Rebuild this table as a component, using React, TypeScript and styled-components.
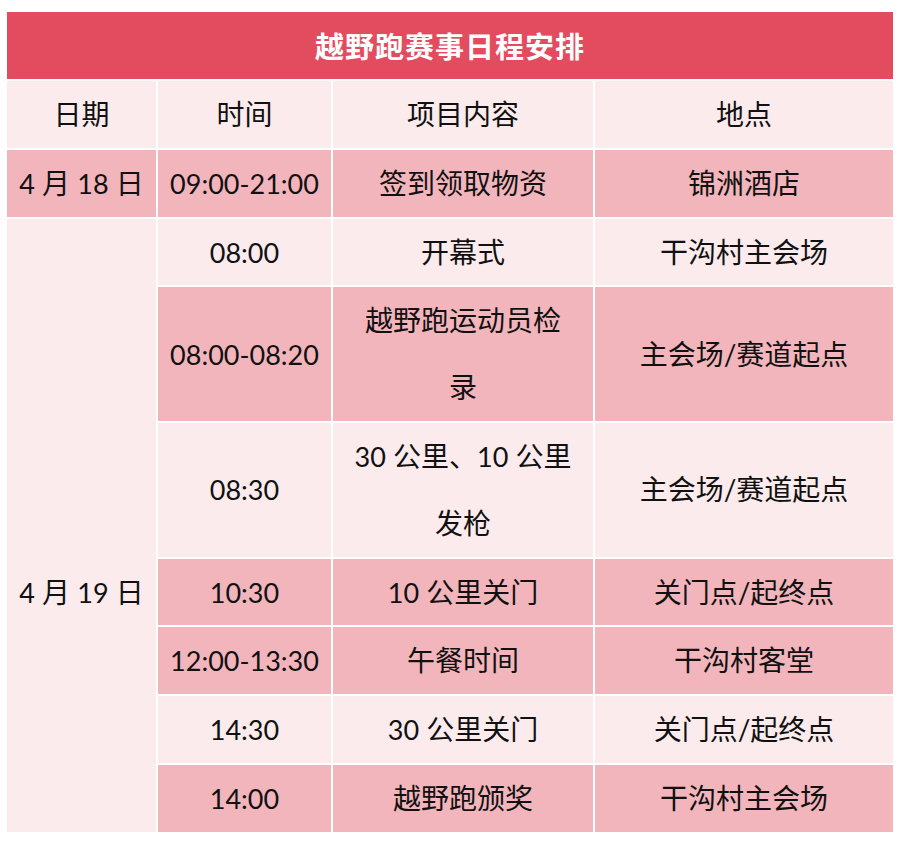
import { Fragment } from "react";
import styled, { createGlobalStyle } from "styled-components";

const GlobalStyle = createGlobalStyle`
  body {
    margin: 0;
    background: #ffffff;
    font-family: "Lato", "Noto Sans CJK SC", sans-serif;
  }
`;

const Page = styled.div`
  padding: 12px 9px 12px 7px;
`;

const Table = styled.div`
  display: grid;
  grid-template-columns: 149px 173px 260px 298px;
  gap: 2px;
  width: 886px;
  background: #ffffff;
`;

const Title = styled.div`
  grid-column: 1 / -1;
  background: #e34b5f;
  color: #ffffff;
  text-align: center;
  font-family: "Noto Sans CJK SC", sans-serif;
  font-size: 29px;
  font-weight: 700;
  line-height: 67px;
  letter-spacing: 1px;
`;

const Cell = styled.div<{ $tone: "light" | "dark"; $span?: number }>`
  background: ${(p) => (p.$tone === "dark" ? "#f2b5bc" : "#fbebed")};
  color: #111111;
  font-size: 28px;
  line-height: 66.8px;
  display: flex;
  align-items: center;
  justify-content: center;
  ${(p) => (p.$span ? `grid-row: span ${p.$span};` : "")}
`;

/* merged date cell: the text sits on the 10:30 line, as in the source sheet */
const MergedCell = styled(Cell)`
  align-items: flex-start;
  padding-top: 340px;
`;

const Text = styled.div`
  text-align: center;
  white-space: nowrap;
`;

const Num = styled.span`
  font-family: "Lato", sans-serif;
  font-size: 27px;
  line-height: 1;
`;

type Row = { time: string; item: string[]; place: string; tone: "light" | "dark" };

const day19: Row[] = [
  { time: "08:00", item: ["开幕式"], place: "干沟村主会场", tone: "light" },
  { time: "08:00-08:20", item: ["越野跑运动员检", "录"], place: "主会场/赛道起点", tone: "dark" },
  { time: "08:30", item: ["30 公里、10 公里", "发枪"], place: "主会场/赛道起点", tone: "light" },
  { time: "10:30", item: ["10 公里关门"], place: "关门点/起终点", tone: "dark" },
  { time: "12:00-13:30", item: ["午餐时间"], place: "干沟村客堂", tone: "dark" },
  { time: "14:30", item: ["30 公里关门"], place: "关门点/起终点", tone: "light" },
  { time: "14:00", item: ["越野跑颁奖"], place: "干沟村主会场", tone: "dark" },
];

const withNums = (text: string) =>
  text.split(/(\d[\d:\-]*)/).map((part, i) =>
    /^\d/.test(part) ? <Num key={i}>{part}</Num> : <span key={i}>{part}</span>
  );

export default function App() {
  return (
    <Page>
      <GlobalStyle />
      <Table>
        <Title>越野跑赛事日程安排</Title>
        <Cell $tone="light"><Text>日期</Text></Cell>
        <Cell $tone="light"><Text>时间</Text></Cell>
        <Cell $tone="light"><Text>项目内容</Text></Cell>
        <Cell $tone="light"><Text>地点</Text></Cell>

        <Cell $tone="dark"><Text>{withNums("4 月 18 日")}</Text></Cell>
        <Cell $tone="dark"><Text>{withNums("09:00-21:00")}</Text></Cell>
        <Cell $tone="dark"><Text>签到领取物资</Text></Cell>
        <Cell $tone="dark"><Text>锦洲酒店</Text></Cell>

        <MergedCell $tone="light" $span={7}><Text>{withNums("4 月 19 日")}</Text></MergedCell>
        {day19.map((r) => (
          <Fragment key={r.time}>
            <Cell $tone={r.tone}><Text>{withNums(r.time)}</Text></Cell>
            <Cell $tone={r.tone}>
              <Text>
                {r.item.map((line, i) => (
                  <div key={i}>{withNums(line)}</div>
                ))}
              </Text>
            </Cell>
            <Cell $tone={r.tone}><Text>{r.place}</Text></Cell>
          </Fragment>
        ))}
      </Table>
    </Page>
  );
}
